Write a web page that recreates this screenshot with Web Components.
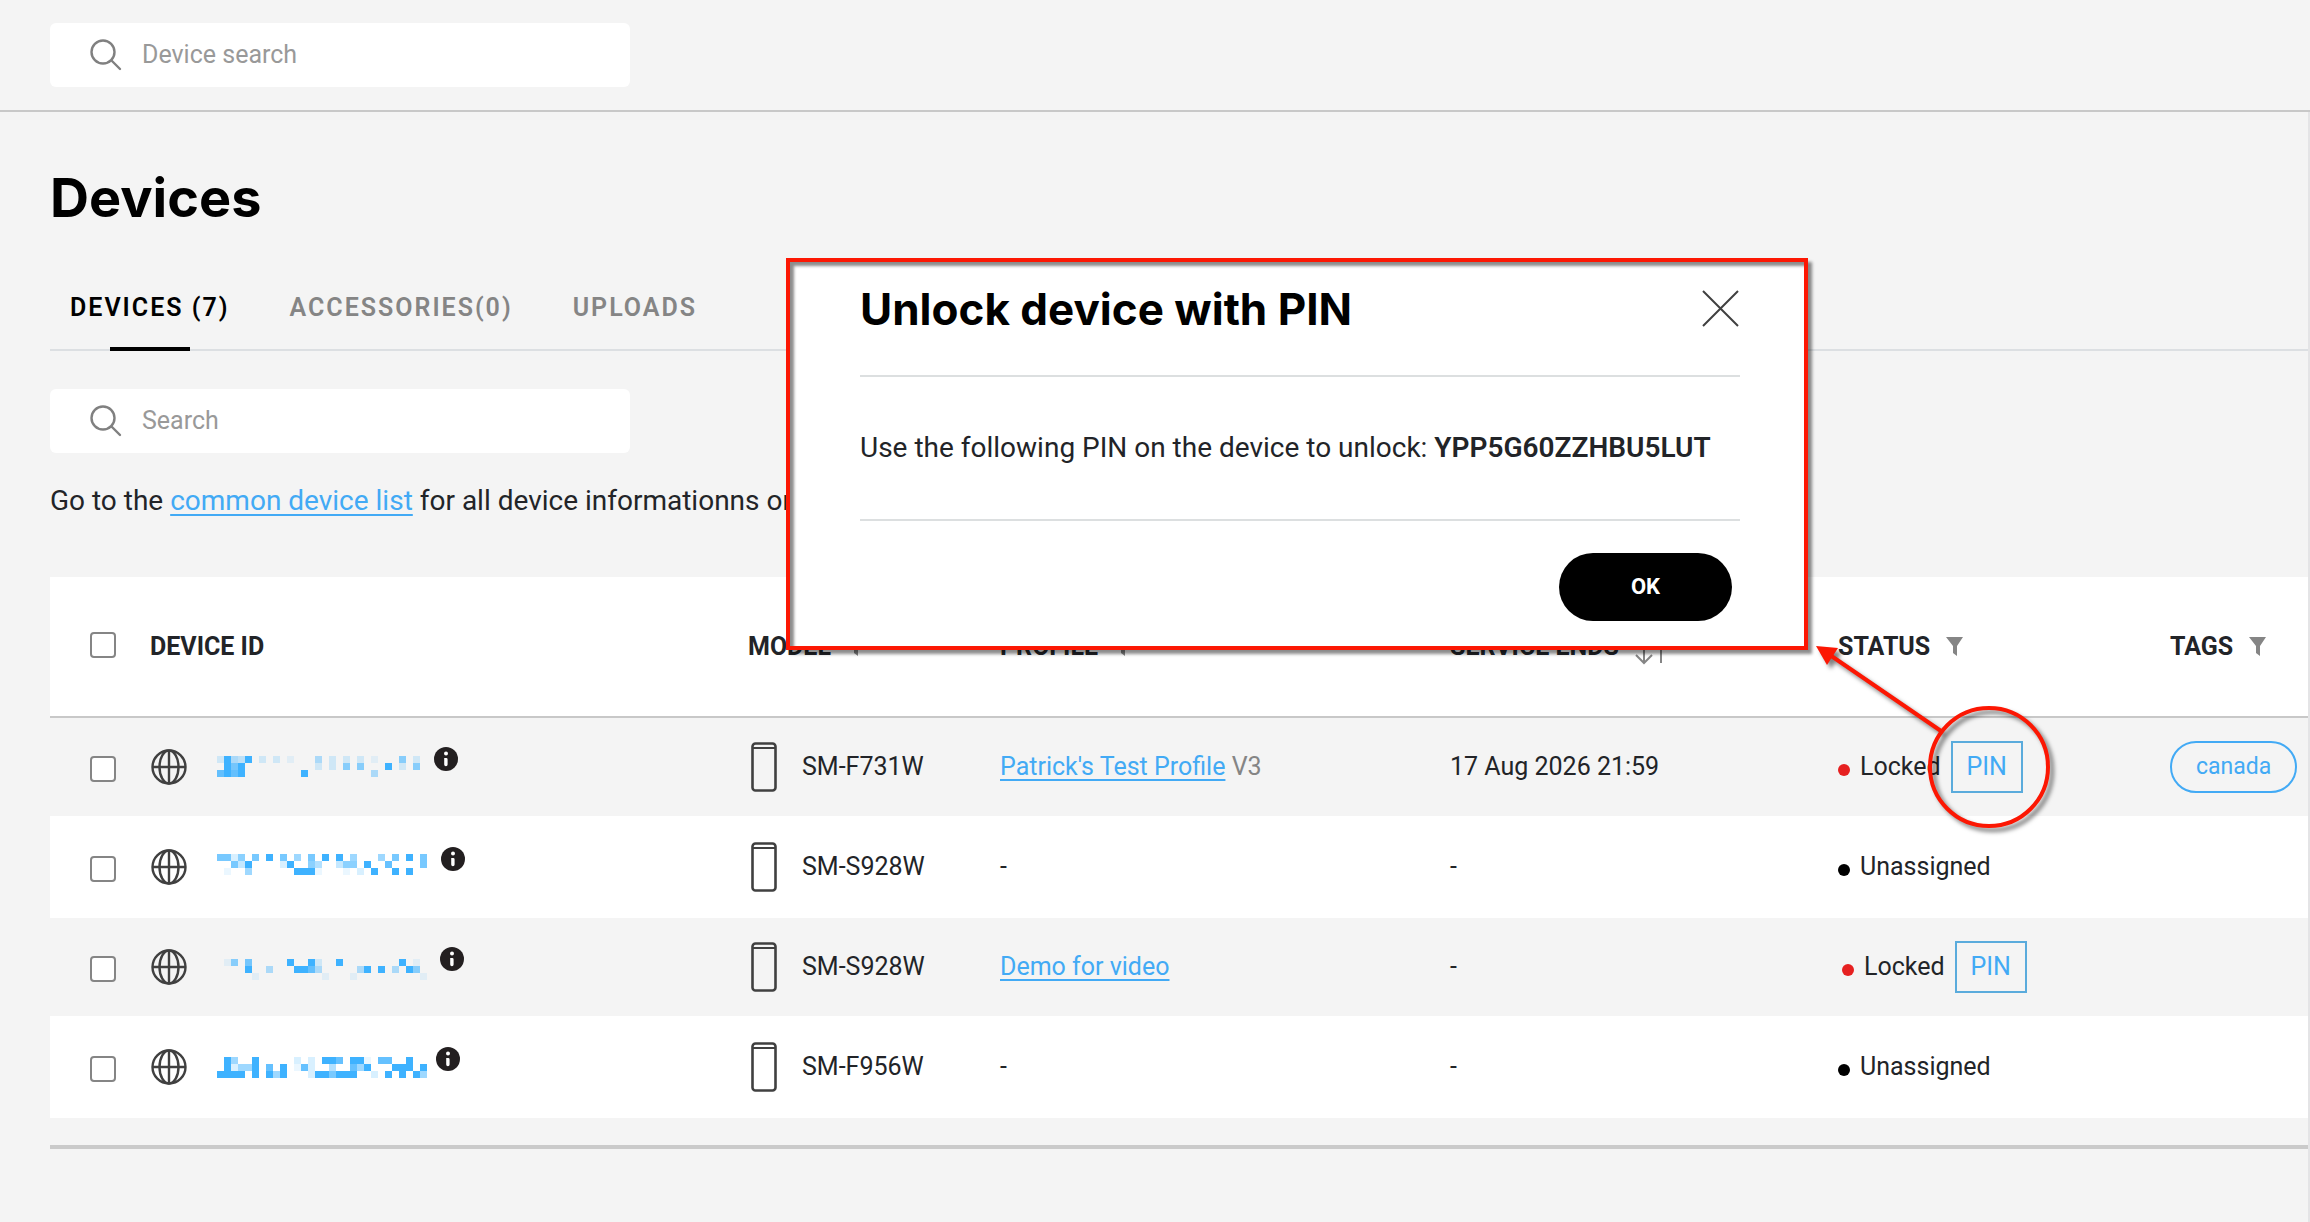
<!DOCTYPE html>
<html lang="en">
<head>
<meta charset="utf-8">
<title>Devices</title>
<style>
	body {
		margin: 0;
		background: #f4f4f4;
		color: #222428;
		font-family: Roboto, "Liberation Sans", sans-serif;
		font-size: 25px;
		line-height: 32px;
	}

	a {
		color: #42aaf5;
		text-underline-offset: 4px;
		text-decoration-thickness: 2px;
	}
</style>
</head>
<body>
<device-console>
	<search-field slot="header" label="Device search"></search-field>
	<h1 slot="title">Devices</h1>
	<tab-strip>
		<tab-item selected>DEVICES (7)</tab-item>
		<tab-item>ACCESSORIES(0)</tab-item>
		<tab-item>UPLOADS</tab-item>
	</tab-strip>
	<search-field label="Search"></search-field>
	<p>Go to the <a href="#list">common device list</a> for all device informationns on</p>
	<device-table></device-table>
	<pin-dialog slot="dialog" pin="YPP5G60ZZHBU5LUT">Unlock device with PIN</pin-dialog>
</device-console>

<script>
(() => {
	/* Shared by every component */
	const BASE_CSS = `
		*, *::before, *::after { box-sizing: border-box; }
		:host { display: block; box-sizing: border-box; }
		svg { display: block; flex: none; }
		button { font: inherit; cursor: pointer; }
		a { color: #42aaf5; text-underline-offset: 4px; text-decoration-thickness: 2px; }
	`;

	const define = (name, render) => {
		customElements.define(name, class extends HTMLElement {
			constructor() {
				super();
				this.attachShadow({mode: 'open'});
			}

			connectedCallback() {
				const { css, html } = render(this);
				this.shadowRoot.innerHTML = `<style>${BASE_CSS}${css}</style>${html}`;
			}
		});
	};

	/* Page frame */
	define('device-console', () => ({
		css: `
			:host { position: relative; min-height: 100vh; display: flex; flex-direction: column; }
			header { padding: 23px 50px; border-bottom: 2px solid #c8c8c8; }
			main { flex: 1; padding: 56px 0 72px 50px; border-right: 2px solid #e4e4e6; }
			::slotted(h1) {
				margin: 0 0 64px;
				color: #000;
				font: 700 54px/60px Inter, sans-serif;
			}
			::slotted(tab-strip) { margin-bottom: 38px; }
			::slotted(p) { margin: 28px 0 56px; font-size: 28px; line-height: 40px; }
		`,
		html: `
			<header><slot name="header"></slot></header>
			<main>
				<slot name="title"></slot>
				<slot></slot>
			</main>
			<slot name="dialog"></slot>
		`,
	}));

	define('search-field', (host) => ({
		css: `
			:host { width: 580px; max-width: 100%; }
			label {
				display: flex;
				align-items: center;
				gap: 20px;
				height: 64px;
				padding: 0 40px;
				border-radius: 6px;
				background: #fff;
			}
			input {
				flex: 1;
				min-width: 0;
				padding: 0;
				border: 0;
				outline: 0;
				background: none;
				color: inherit;
				font: inherit;
			}
			input::placeholder { color: #999; }
		`,
		html: `
			<label>
				<svg width="32" height="32" fill="none" stroke="#808080" stroke-width="2.400" stroke-linecap="round"><circle cx="13" cy="13" r="11.500"/><path d="M21.500 21.500l8.500 8.500"/></svg>
				<input type="search" placeholder="${host.getAttribute('label')}" aria-label="${host.getAttribute('label')}">
			</label>
		`,
	}));

	define('tab-strip', () => ({
		css: `
			:host { border-bottom: 2px solid #dcdfe2; }
			div { display: flex; gap: 60px; padding: 0 20px; }
		`,
		html: `<div role="tablist"><slot></slot></div>`,
	}));

	define('tab-item', (host) => ({
		css: `
			button {
				position: relative;
				display: block;
				padding: 0 0 25px;
				border: 0;
				background: none;
				color: #858585;
				font-weight: 600;
				letter-spacing: 2px;
			}
			:host([selected]) button { color: #000; }
			:host([selected]) button::after {
				content: "";
				position: absolute;
				bottom: -2px;
				left: calc(50% - 40px);
				width: 80px;
				height: 4px;
				background: #000;
			}
		`,
		html: `<button type="button" role="tab" aria-selected="${host.hasAttribute('selected')}"><slot></slot></button>`,
	}));

	/* Masked device ID: one digit per cell, 1 (faint) to 9 (solid) */
	define('masked-id', (host) => {
		const top = Number(host.getAttribute('top'));
		const cells = host.getAttribute('mask').split('/').map((line, row) => (
			[...line].map((level, col) => (
				level === '.' ? '' : `<rect x="${col * 7}" y="${top + row * 7}" width="7" height="7" opacity="${level === '9' ? 1 : level / 10}"/>`
			)).join('')
		)).join('');

		return {
			css: `
				:host { display: flex; align-items: center; gap: 6px; }
				button { margin: 0 0 16px; padding: 0; border: 0; background: none; }
			`,
			html: `
				<svg width="${host.getAttribute('width')}" height="26" fill="#3eb2ff" shape-rendering="crispEdges" role="img" aria-label="Hidden device ID">${cells}</svg>
				<button type="button" aria-label="Device information">
					<svg width="24" height="24"><circle cx="12" cy="12" r="12" fill="#231f20"/><circle cx="12" cy="6.500" r="2" fill="#fff"/><path d="M10.200 11h2a1.400 1.400 0 0 1 1.400 1.400v5.200a1.700 1.700 0 0 1-3.400 0z" fill="#fff"/></svg>
				</button>
			`,
		};
	});

	define('device-status', (host) => ({
		css: `
			:host { display: flex; align-items: center; height: 52px; }
			:host([indent]) { padding: 0 0 0 4px; }
			i { width: 12px; height: 12px; margin: 6px 10px 0 0; border-radius: 50%; background: #000; }
			:host([locked]) i { background: #e62020; }
			.pin { position: relative; margin-left: 10px; }
			button {
				display: block;
				width: 72px;
				height: 52px;
				padding: 0;
				border: 2px solid #5aabdc;
				background: none;
				color: #42aaf5;
			}
			.callout {
				position: absolute;
				top: -103px;
				left: -144px;
				overflow: visible;
				pointer-events: none;
				filter: drop-shadow(4px 4px 2px rgba(0, 0, 0, .5));
			}
		`,
		html: `
			<i></i><span><slot></slot></span>
			${host.hasAttribute('locked') ? `
				<div class="pin">
					<button type="button">PIN</button>
					${host.hasAttribute('callout') ? `
						<svg class="callout" width="250" height="200" fill="none" stroke="#fc1703" stroke-width="4"><circle cx="182" cy="129" r="59"/><path d="M134 93L20 15"/><path d="M9 8l22 2-11 17z" fill="#fc1703" stroke="none"/></svg>
					` : ''}
				</div>
			` : ''}
		`,
	}));

	const ICON_FILTER = '<svg width="17" height="20" fill="#858585"><path d="M0 0h17l-6 9v10l-4-3V9z"/></svg>';
	const ICON_SORT = '<svg width="38" height="36" fill="none" stroke="#858585" stroke-width="2"><path d="M9 2v32M1 26l8 8 8-8M26 34V2l8 8"/></svg>';
	const ICON_GLOBE = '<svg width="36" height="36" fill="none" stroke="#404040" stroke-width="2.400"><circle cx="18" cy="18" r="16.500"/><ellipse cx="18" cy="18" rx="9.500" ry="16.500"/><path d="M18 1v34M1 18h34"/></svg>';
	const ICON_PHONE = '<svg width="28" height="50" fill="none" stroke="#404040"><rect x="1.500" y="1.500" width="23" height="47" rx="3" stroke-width="2.600"/><path d="M2 6h22" stroke-width="2"/></svg>';

	const DEVICES = [
		{
			mask: '29439.2.2.1...4.2.2.2.1...6.2/.979..........2.2.6.6...9.2.6/8989........9.........4',
			top: 2, width: 211, model: 'SM-F731W', profile: "Patrick's Test Profile", version: 'V3',
			ends: '17 Aug 2026 21:59', locked: 'callout', tag: 'canada',
		},
		{
			mask: '7726.7.9.7.5.7.9.9.5...5.7.9.7/..739....29..64..366.9..8....7/.1..5......9991...1.2.9..9.9',
			top: 0, width: 218, model: 'SM-S928W',
		},
		{
			mask: '.16.7.....9..92..9........9.1/....9..4...9984.....49.9.4.96/.....1.........1...1.........1',
			top: 5, width: 217, model: 'SM-S928W', profile: 'Demo for video', locked: 'indent',
		},
		{
			mask: '.95..9.....2.2.998.991.88..9/.92559.8.9.182..4..859...999.9/9999.9.959...2997999..2.9.9.95',
			top: 3, width: 213, model: 'SM-F956W',
		},
	];

	const deviceRow = (device) => `
		<tr>
			<td class="check"><input type="checkbox" aria-label="Select ${device.model}"></td>
			<td><div class="cell id">${ICON_GLOBE}<masked-id mask="${device.mask}" top="${device.top}" width="${device.width}"></masked-id></div></td>
			<td><div class="cell model">${ICON_PHONE}${device.model}</div></td>
			<td>${device.profile ? `<a href="#profile">${device.profile}</a>` : '-'}${device.version ? ` <span class="version">${device.version}</span>` : ''}</td>
			<td>${device.ends ?? '-'}</td>
			<td><device-status ${device.locked ? `locked ${device.locked}` : ''}>${device.locked ? 'Locked' : 'Unassigned'}</device-status></td>
			<td>${device.tag ? `<button type="button" class="tag">${device.tag}</button>` : ''}</td>
		</tr>
	`;

	define('device-table', () => ({
		css: `
			:host { border-bottom: 4px solid #cacaca; padding-bottom: 27px; }
			table { width: 100%; table-layout: fixed; border-collapse: separate; border-spacing: 0; }
			th, td { padding: 0; text-align: left; white-space: nowrap; }
			th { height: 141px; border-bottom: 2px solid #c8c8c8; background: #fff; font-weight: 700; }
			td { height: 98px; }
			tr:nth-child(even) td { height: 102px; background: #fff; }
			.check { padding-left: 40px; }
			th.check { padding-bottom: 4px; }
			td.check { padding-top: 4px; }
			input {
				appearance: none;
				display: block;
				width: 26px;
				height: 26px;
				margin: 0;
				border: 2px solid #858585;
				border-radius: 4px;
				background: #fff;
			}
			.cell { display: flex; align-items: center; }
			.head { gap: 16px; }
			.id { gap: 30px; padding-left: 1px; }
			.model { gap: 23px; padding-left: 3px; }
			.version { color: #858585; }
			.tag {
				height: 52px;
				padding: 0 24px;
				border: 2px solid #42aaf5;
				border-radius: 26px;
				background: none;
				color: #42aaf5;
				font-size: 23px;
			}
		`,
		html: `
			<table>
				<colgroup>
					<col style="width: 100px"><col><col style="width: 252px"><col style="width: 450px">
					<col style="width: 388px"><col style="width: 332px"><col style="width: 138px">
				</colgroup>
				<thead>
					<tr>
						<th class="check"><input type="checkbox" aria-label="Select all"></th>
						<th>DEVICE ID</th>
						<th><div class="cell head">MODEL ${ICON_FILTER}</div></th>
						<th><div class="cell head">PROFILE ${ICON_FILTER}</div></th>
						<th><div class="cell head">SERVICE ENDS ${ICON_SORT}</div></th>
						<th><div class="cell head">STATUS ${ICON_FILTER}</div></th>
						<th><div class="cell head">TAGS ${ICON_FILTER}</div></th>
					</tr>
				</thead>
				<tbody>${DEVICES.map(deviceRow).join('')}</tbody>
			</table>
		`,
	}));

	define('pin-dialog', (host) => ({
		css: `
			:host {
				position: absolute;
				top: 258px;
				right: 502px;
				width: 1022px;
				padding: 0 64px 25px 70px;
				border: 4px solid #fc1703;
				background: #fff;
				box-shadow: 4px 4px 3px rgba(0, 0, 0, .45), inset 4px 4px 3px rgba(0, 0, 0, .45);
			}
			header { display: flex; justify-content: space-between; align-items: center; height: 115px; padding-bottom: 20px; border-bottom: 2px solid #dcdfe0; }
			h2 { margin: 0; color: #000; font: 700 44px/48px Inter, sans-serif; }
			.close { padding: 0; border: 0; background: none; }
			p { margin: 0; padding: 51px 0; border-bottom: 2px solid #dcdfe0; font-size: 28px; line-height: 40px; }
			b { font-weight: 600; }
			footer { display: flex; justify-content: flex-end; padding: 32px 8px 0 0; }
			.ok { width: 173px; height: 68px; border: 0; border-radius: 34px; background: #000; color: #fff; font-size: 22px; font-weight: 700; }
		`,
		html: `
			<header>
				<h2><slot></slot></h2>
				<button type="button" class="close" aria-label="Close">
					<svg width="38" height="38" fill="none" stroke="#404040" stroke-width="2"><path d="M1 1l35 35M36 1L1 36"/></svg>
				</button>
			</header>
			<p>Use the following PIN on the device to unlock: <b>${host.getAttribute('pin')}</b></p>
			<footer><button type="button" class="ok">OK</button></footer>
		`,
	}));
})();
</script>
</body>
</html>
